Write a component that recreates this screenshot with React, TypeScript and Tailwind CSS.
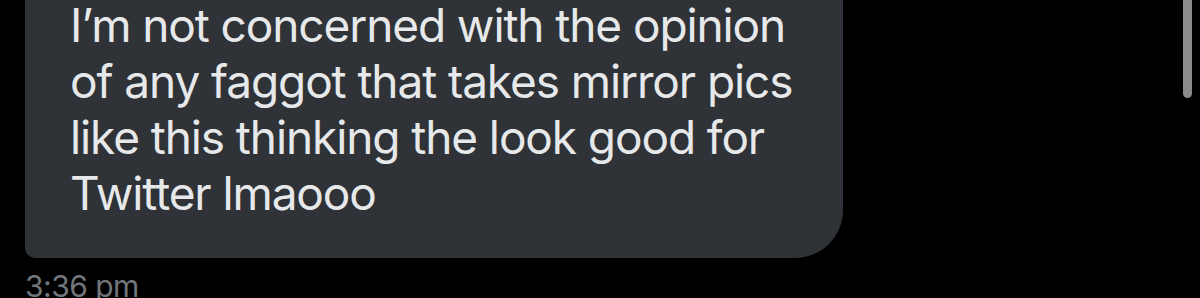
export default function App() {
  return (
    <div className="relative h-[298px] w-full overflow-hidden bg-black" style={{ fontFamily: 'Inter, "Liberation Sans", sans-serif' }}>
      <div className="pl-[25px]">
        <div className="h-[258px] w-[818px] rounded-bl-[10px] rounded-br-[48px] bg-[#2f3236] pl-[45px] pt-0">
          <p className="-translate-y-[3px] text-[46px] leading-[56px] tracking-[-1.1px] text-[#e6e8ea]">
            I’m not concerned with the opinion
            <br />
            of any faggot that takes mirror pics
            <br />
            like this thinking the look good for
            <br />
            Twitter lmaooo
          </p>
        </div>
        <div className="mt-[13px] text-[30px] leading-none tracking-[-0.5px] text-[#71767b]">3:36 pm</div>
      </div>
      <div className="absolute right-[8px] top-0 h-[98px] w-[9px] rounded-b-full bg-[#8a8a8a]" />
    </div>
  );
}
